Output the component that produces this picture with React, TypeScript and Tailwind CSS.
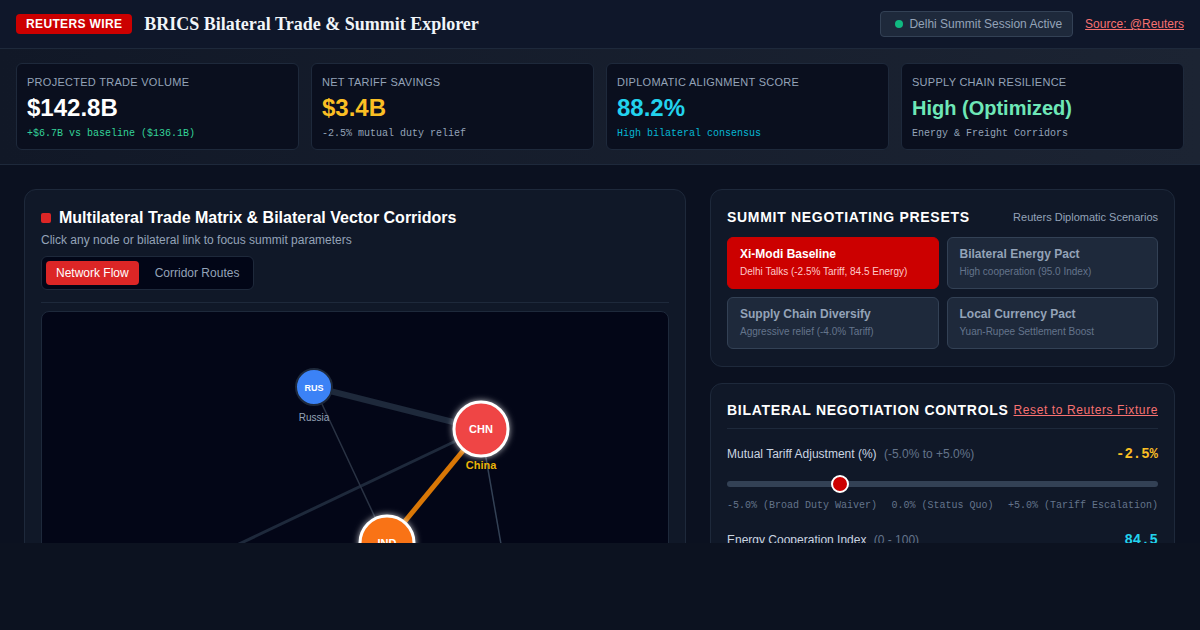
import React from "react";

const stats = [
  { label: "Projected Trade Volume", value: "$142.8B", valueCls: "text-white text-2xl mt-0.5", sub: "+$6.7B vs baseline ($136.1B)", subCls: "text-[#34d399] mt-[3px]" },
  { label: "Net Tariff Savings", value: "$3.4B", valueCls: "text-[#fbbf24] text-2xl mt-0.5", sub: "-2.5% mutual duty relief", subCls: "text-[#94a3b8] mt-[3px]" },
  { label: "Diplomatic Alignment Score", value: "88.2%", valueCls: "text-[#22d3ee] text-2xl mt-0.5", sub: "High bilateral consensus", subCls: "text-[#06b6d4] mt-[3px]" },
  { label: "Supply Chain Resilience", value: "High (Optimized)", valueCls: "text-[#6ee7b7] text-xl leading-7 mt-1", sub: "Energy & Freight Corridors", subCls: "text-[#94a3b8] mt-[5px]" },
];

const presets = [
  { title: "Xi-Modi Baseline", sub: "Delhi Talks (-2.5% Tariff, 84.5 Energy)", active: true },
  { title: "Bilateral Energy Pact", sub: "High cooperation (95.0 Index)", active: false },
  { title: "Supply Chain Diversify", sub: "Aggressive relief (-4.0% Tariff)", active: false },
  { title: "Local Currency Pact", sub: "Yuan-Rupee Settlement Boost", active: false },
];

function NetworkGraph() {
  return (
    <svg width="627" height="400" viewBox="0 0 627 400" className="block">
      <defs>
        <filter id="glow" x="-50%" y="-50%" width="200%" height="200%">
          <feGaussianBlur in="SourceAlpha" stdDeviation="3" result="b" />
          <feFlood floodColor="#ffffff" floodOpacity="0.7" />
          <feComposite in2="b" operator="in" result="g" />
          <feMerge>
            <feMergeNode in="g" />
            <feMergeNode in="SourceGraphic" />
          </feMerge>
        </filter>
      </defs>
      {/* corridors */}
      <line x1="439" y1="117" x2="12" y2="320" stroke="#1e293b" strokeWidth="3" />
      <line x1="439" y1="117" x2="476" y2="330" stroke="#334155" strokeWidth="1.5" />
      <line x1="272" y1="75" x2="345" y2="231" stroke="#2a3344" strokeWidth="1.5" />
      <line x1="272" y1="75" x2="439" y2="117" stroke="#1e293b" strokeWidth="6" />
      <line x1="439" y1="117" x2="345" y2="231" stroke="#d97706" strokeWidth="5" />
      {/* nodes */}
      <circle cx="272" cy="75" r="18" fill="#3b82f6" stroke="#1e293b" strokeWidth="2" />
      <text x="272" y="79" textAnchor="middle" fill="#fff" fontSize="9" fontWeight="700" fontFamily="Liberation Sans, Arial, sans-serif">RUS</text>
      <text x="272" y="109" textAnchor="middle" fill="#94a3b8" fontSize="10" fontFamily="Liberation Sans, Arial, sans-serif">Russia</text>

      <circle cx="439" cy="117" r="27" fill="#ef4444" stroke="#fff" strokeWidth="3" filter="url(#glow)" />
      <text x="439" y="121" textAnchor="middle" fill="#fff" fontSize="11" fontWeight="700" fontFamily="Liberation Sans, Arial, sans-serif">CHN</text>
      <text x="439" y="157" textAnchor="middle" fill="#eab308" fontSize="11" fontWeight="700" fontFamily="Liberation Sans, Arial, sans-serif">China</text>

      <circle cx="345" cy="231" r="27" fill="#f97316" stroke="#fff" strokeWidth="3" filter="url(#glow)" />
      <text x="345" y="235" textAnchor="middle" fill="#fff" fontSize="11" fontWeight="700" fontFamily="Liberation Sans, Arial, sans-serif">IND</text>
    </svg>
  );
}

export default function App() {
  return (
    <div className="w-full h-[630px] bg-[#0c1220] font-['Liberation_Sans',Arial,sans-serif]">
      <div className="h-[543px] overflow-hidden bg-[#0b1120] flex flex-col">
        {/* Header */}
        <header className="h-[49px] shrink-0 flex items-center justify-between px-4 bg-[#0f172a] border-b border-[#1e293b]">
          <div className="flex items-center gap-3">
            <span className="bg-[#cc0000] text-white text-xs font-bold px-2.5 py-0.5 rounded leading-4 tracking-[0.03em]">REUTERS WIRE</span>
            <h1 className="font-['Liberation_Serif','Times_New_Roman',serif] text-lg font-bold text-[#f1f5f9]">
              BRICS Bilateral Trade &amp; Summit Explorer
            </h1>
          </div>
          <div className="flex items-center gap-3">
            <div className="flex items-center gap-1.5 h-[26px] pl-3.5 pr-2.5 bg-[#1e293b] border border-[#334155] rounded text-xs text-[#94a3b8]">
              <span className="w-2 h-2 rounded-full bg-[#10b981]"></span>
              <span>Delhi Summit Session Active</span>
            </div>
            <a className="text-xs text-[#f87171] underline">Source: @Reuters</a>
          </div>
        </header>

        {/* Stats band */}
        <section className="shrink-0 grid grid-cols-4 gap-3 px-4 pt-3.5 pb-[14px] bg-gradient-to-r from-[#111827] to-[#1c2433] border-b border-[#1e293b]">
          {stats.map((s) => (
            <div key={s.label} className="h-[87px] bg-[#0a0f1e] border border-[#1e293b] rounded-md px-2.5 pt-2.5">
              <div className="text-[11px] uppercase tracking-wide text-[#94a3b8] leading-4">{s.label}</div>
              <div className={`font-bold ${s.valueCls}`}>{s.value}</div>
              <div className={`font-mono text-[10px] leading-[14px] ${s.subCls}`}>{s.sub}</div>
            </div>
          ))}
        </section>

        {/* Main */}
        <main className="flex-1 flex gap-6 px-6 pt-6">
          {/* Left panel */}
          <div className="w-[662px] shrink-0 bg-[#101828] border border-[#1e293b] rounded-xl p-4 self-start">
            <div className="flex items-center gap-2">
              <span className="w-2.5 h-2.5 rounded-[2px] bg-[#dc2626]"></span>
              <h2 className="text-base font-bold text-white">Multilateral Trade Matrix &amp; Bilateral Vector Corridors</h2>
            </div>
            <p className="text-xs text-[#94a3b8] mt-0.5">Click any node or bilateral link to focus summit parameters</p>
            <div className="mt-2 inline-flex gap-1.5 p-1 bg-[#020617] border border-[#1e293b] rounded-md">
              <button className="h-6 px-2.5 rounded bg-[#dc2626] text-white text-xs">Network Flow</button>
              <button className="h-6 px-2.5 rounded text-[#94a3b8] text-xs">Corridor Routes</button>
            </div>
            <div className="mt-3 border-t border-[#1e293b] pt-2">
              <div className="bg-[#030617] border border-[#1e293b] rounded-lg overflow-hidden h-[400px]">
                <NetworkGraph />
              </div>
            </div>
          </div>

          {/* Right column */}
          <div className="w-[465px] shrink-0 flex flex-col">
            <div className="bg-[#101828] border border-[#1e293b] rounded-xl px-4 pt-4 pb-[17px]">
              <div className="flex items-center justify-between h-5 mt-px">
                <h3 className="text-sm font-bold tracking-wider text-white">SUMMIT NEGOTIATING PRESETS</h3>
                <span className="text-[11px] text-[#94a3b8]">Reuters Diplomatic Scenarios</span>
              </div>
              <div className="mt-2.5 grid grid-cols-2 gap-2">
                {presets.map((p) => (
                  <div
                    key={p.title}
                    className={
                      p.active
                        ? "rounded-md border border-[#cc0000] bg-[#cc0000] px-3 py-2"
                        : "rounded-md border border-[#334155] bg-[#1e293b] px-3 py-2"
                    }
                  >
                    <div className={p.active ? "text-xs font-bold leading-4 text-white" : "text-xs font-bold leading-4 text-[#94a3b8]"}>{p.title}</div>
                    <div className={p.active ? "text-[10px] leading-4 mt-0.5 text-[#fecaca]" : "text-[10px] leading-4 mt-0.5 text-[#64748b]"}>{p.sub}</div>
                  </div>
                ))}
              </div>
            </div>

            <div className="mt-4 bg-[#101828] border border-[#1e293b] rounded-xl p-4">
              <div className="flex items-center justify-between h-5">
                <h3 className="text-sm font-bold tracking-wider text-white">BILATERAL NEGOTIATION CONTROLS</h3>
                <a className="text-xs tracking-wider text-[#f87171] underline">Reset to Reuters Fixture</a>
              </div>
              <div className="mt-2 border-t border-[#1e293b]"></div>

              <div className="mt-[17px] flex items-center justify-between h-4">
                <div className="text-xs text-[#cbd5e1]">
                  Mutual Tariff Adjustment (%) <span className="ml-1 text-[#64748b]">(-5.0% to +5.0%)</span>
                </div>
                <span className="font-mono text-sm font-bold text-[#fbbf24]">-2.5%</span>
              </div>
              <div className="mt-3 h-5 relative flex items-center">
                <div className="w-full h-1.5 rounded-full bg-[#334155]"></div>
                <div className="absolute left-[104px] top-[1px] w-[18px] h-[18px] rounded-full bg-[#cc0000] border-2 border-white"></div>
              </div>
              <div className="mt-[5px] flex justify-between font-mono text-[10px] leading-[14px] text-[#64748b]">
                <span>-5.0% (Broad Duty Waiver)</span>
                <span>0.0% (Status Quo)</span>
                <span>+5.0% (Tariff Escalation)</span>
              </div>

              <div className="mt-[19px] flex items-center justify-between h-4">
                <div className="text-xs text-[#cbd5e1]">
                  Energy Cooperation Index <span className="ml-1 text-[#64748b]">(0 - 100)</span>
                </div>
                <span className="font-mono text-sm font-bold text-[#22d3ee]">84.5</span>
              </div>
              <div className="mt-3 h-5 relative flex items-center">
                <div className="w-full h-1.5 rounded-full bg-[#334155]"></div>
              </div>
            </div>
          </div>
        </main>
      </div>
    </div>
  );
}
